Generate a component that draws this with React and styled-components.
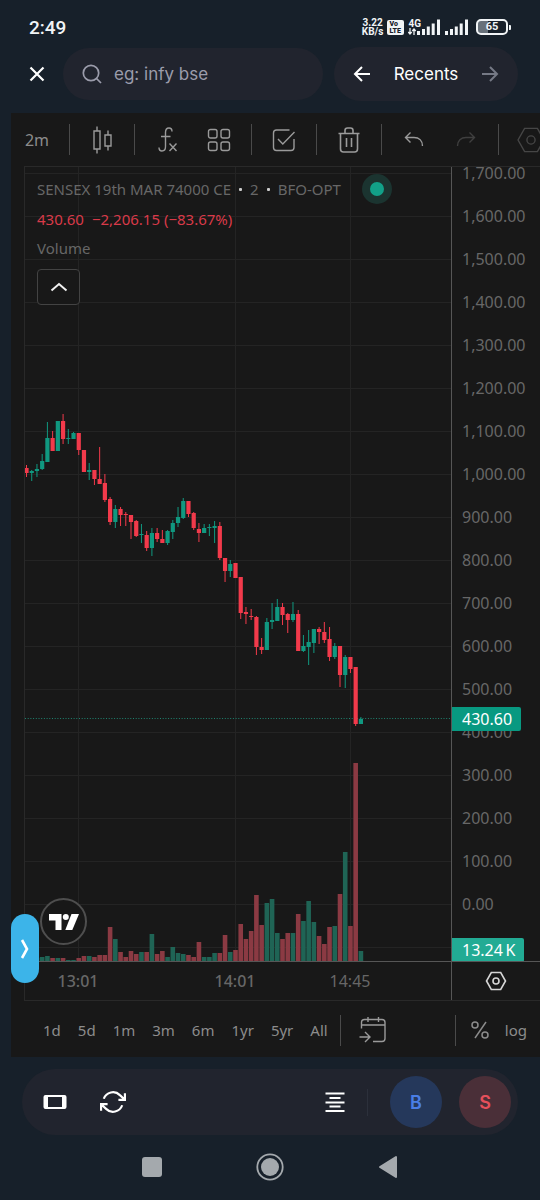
import React from "react";
import styled, { createGlobalStyle } from "styled-components";

const GlobalStyle = createGlobalStyle`
  *, *::before, *::after { box-sizing: border-box; }
  body { margin: 0; background: #17202a; }
  button, input { font: inherit; color: inherit; }
`;

const UP = "#109880";
const DOWN = "#f23a4b";
const chartFont = `"Noto Sans", "Open Sans", sans-serif`;

/* ---------- data ---------- */

// direction, then high / body top / body bottom / low as offsets inside the plot, then volume height
const CANDLES = [
  ["d", 299, 302, 307, 311, 3], ["u", 304, 305, 307, 315, 3], ["u", 298, 303, 305, 311, 3],
  ["u", 288, 295, 303, 304, 4], ["u", 256, 272, 296, 296, 5], ["d", 265, 272, 285, 285, 3],
  ["u", 255, 255, 285, 285, 3], ["d", 248, 255, 273, 278, 3], ["u", 263, 272, 273, 278, 1],
  ["u", 266, 267, 273, 273, 1], ["d", 267, 267, 284, 289, 3], ["d", 284, 284, 306, 306, 5],
  ["u", 297, 304, 306, 314, 5], ["d", 304, 304, 313, 319, 4], ["d", 281, 313, 318, 318, 6],
  ["d", 308, 317, 334, 336, 6], ["d", 331, 333, 356, 359, 34], ["u", 339, 343, 356, 362, 22],
  ["d", 341, 343, 349, 360, 9], ["d", 346, 348, 349, 360, 4], ["d", 349, 349, 356, 373, 10],
  ["d", 354, 355, 370, 371, 7], ["u", 358, 368, 369, 377, 9], ["d", 365, 369, 382, 385, 9],
  ["u", 362, 367, 382, 390, 27], ["d", 362, 367, 373, 376, 7], ["d", 364, 373, 377, 377, 10],
  ["u", 364, 365, 377, 379, 4], ["u", 354, 357, 366, 373, 14], ["u", 341, 351, 357, 361, 8],
  ["u", 332, 335, 352, 353, 7], ["d", 335, 335, 348, 351, 6], ["d", 346, 347, 362, 364, 4],
  ["d", 357, 363, 367, 376, 19], ["u", 358, 362, 367, 367, 4], ["u", 358, 361, 362, 370, 4],
  ["u", 355, 360, 362, 377, 8], ["d", 356, 360, 392, 394, 8], ["d", 392, 392, 405, 416, 26],
  ["u", 394, 398, 405, 411, 9], ["d", 397, 397, 412, 412, 11], ["d", 411, 411, 447, 453, 37],
  ["d", 441, 446, 448, 458, 22], ["d", 443, 450, 451, 454, 30], ["d", 450, 451, 481, 489, 66],
  ["d", 472, 481, 484, 488, 36], ["u", 452, 456, 484, 484, 58], ["u", 437, 454, 456, 463, 62],
  ["u", 433, 441, 455, 455, 28], ["d", 437, 441, 449, 459, 22], ["d", 447, 448, 454, 467, 28],
  ["u", 436, 448, 454, 456, 28], ["d", 444, 448, 485, 485, 47], ["u", 469, 480, 485, 486, 40],
  ["u", 464, 476, 481, 499, 60], ["u", 463, 463, 477, 487, 39], ["d", 461, 463, 466, 478, 25],
  ["d", 456, 466, 474, 477, 17], ["d", 461, 473, 491, 495, 34], ["u", 477, 480, 491, 493, 35],
  ["d", 480, 480, 509, 521, 67], ["u", 489, 491, 509, 522, 109], ["d", 491, 491, 503, 507, 35],
  ["d", 501, 501, 558, 560, 198], ["u", 551, 553, 558, 558, 10],
];
const PRICES = [
  "1,700.00", "1,600.00", "1,500.00", "1,400.00", "1,300.00", "1,200.00", "1,100.00", "1,000.00", "900.00",
  "800.00", "700.00", "600.00", "500.00", "400.00", "300.00", "200.00", "100.00", "0.00",
];
const RANGES = ["1d", "5d", "1m", "3m", "6m", "1yr", "5yr", "All"];
const PLOT_HEIGHT = 794;
const CANDLE_STEP = 5.225;

/* ---------- page ---------- */

const Page = styled.div`
  display: flex;
  flex-direction: column;
  min-height: 100vh;
  background: #17202a;
  overflow: hidden;
`;
const IconButton = styled.button`
  display: flex;
  align-items: center;
  justify-content: center;
  flex: none;
  width: ${(p) => p.$w || 40}px;
  height: 40px;
  padding: 0;
  border: 0;
  background: none;
  color: ${(p) => p.$color || "#fff"};
  cursor: pointer;
`;

/* ---------- status bar ---------- */

const StatusBar = styled.div`
  display: flex;
  align-items: center;
  height: 47px;
  padding: 7px 29px 0;
  color: #f1f4f6;
  font-family: Roboto, sans-serif;
`;
const Clock = styled.time`
  flex: 1;
  font-size: 19px;
  font-weight: 500;
`;
const StatusIcons = styled.div`
  display: flex;
  align-items: center;
  gap: 4px;
`;
const Speed = styled.div`
  font-size: 10px;
  line-height: 9px;
  font-weight: 700;
  text-align: center;
`;
const VoLte = styled.div`
  width: 17px;
  height: 15px;
  padding: 1px 2px;
  border-radius: 2px;
  background: #f1f4f6;
  color: #17202a;
  font-size: 7px;
  line-height: 7px;
  font-weight: 900;
`;
const Network = styled.div`
  display: flex;
  align-items: flex-end;
`;
const NetworkType = styled.div`
  display: flex;
  flex-direction: column;
  align-items: flex-start;
  margin-right: -4px;
  font-size: 10px;
  line-height: 9px;
  font-weight: 700;
`;
const Battery = styled.div`
  display: flex;
  align-items: center;
  margin-left: 3px;
  &::after {
    content: "";
    width: 2px;
    height: 5px;
    margin-left: 1px;
    border-radius: 0 1px 1px 0;
    background: #f1f4f6;
  }
`;
const BatteryCell = styled.div`
  width: 32px;
  height: 16px;
  border: 2px solid #f1f4f6;
  border-radius: 5px;
  background: linear-gradient(90deg, #68717a 0 10px, transparent 10px);
  font-size: 11px;
  line-height: 12px;
  font-weight: 700;
  text-align: center;
`;

/* ---------- search header ---------- */

const Header = styled.header`
  display: flex;
  align-items: center;
  height: 54px;
  padding: 0 22px 0 17px;
  font-family: Inter, sans-serif;
  font-size: 17px;
`;
const SearchPill = styled.label`
  display: flex;
  align-items: center;
  gap: 12px;
  flex: 1;
  min-width: 0;
  height: 52px;
  margin: 0 11px 0 6px;
  padding: 0 20px 0 19px;
  border-radius: 26px;
  background: #21242e;
  color: #9b9cab;
  svg { flex: none; }
`;
const SearchInput = styled.input`
  flex: 1;
  min-width: 0;
  padding: 0;
  border: 0;
  outline: 0;
  background: none;
  &::placeholder { color: #9b9cab; opacity: 1; }
`;
const RecentsPill = styled.nav`
  display: flex;
  align-items: center;
  justify-content: space-between;
  width: 184px;
  height: 54px;
  padding: 0 8px;
  border-radius: 27px;
  background: #21242e;
  color: #fff;
`;

/* ---------- chart ---------- */

const ChartPanel = styled.main`
  margin: 12px 0 0 11px;
  background: #181818;
  font-family: ${chartFont};
  color: #8c8c8c;
`;
const Toolbar = styled.div`
  display: flex;
  align-items: center;
  height: 53px;
  overflow: hidden;
  font-size: 16px;
`;
const ToolDivider = styled.span`
  flex: none;
  width: 1px;
  height: 31px;
  margin: 0 6px;
  background: #4a4a4a;
`;
const ChartFrame = styled.section`
  margin-left: 13px;
  border: solid #292929;
  border-width: 1px 0 1px 1px;
`;
const PlotRow = styled.div`
  display: flex;
  height: ${PLOT_HEIGHT}px;
`;
const Plot = styled.div`
  position: relative;
  flex: 1;
  min-width: 0;
  svg { display: block; }
`;
const Legend = styled.div`
  position: absolute;
  top: 7px;
  left: 12px;
  font-size: 15px;
  line-height: 30px;
  white-space: nowrap;
  color: #676767;
`;
const LegendRow = styled.div`
  display: flex;
  align-items: center;
  height: ${(p) => p.$h || 30}px;
  color: ${(p) => p.$color || "inherit"};
  gap: 8px;
`;
const Dot = styled.b`
  width: 3px;
  height: 3px;
  border-radius: 1px;
  background: #ccc;
`;
const MarketStatus = styled.span`
  width: 30px;
  height: 30px;
  margin-left: 13px;
  border: 8px solid #1b3430;
  border-radius: 50%;
  background: #12a088;
`;
const CollapseButton = styled.button`
  display: flex;
  align-items: center;
  justify-content: center;
  width: 43px;
  height: 36px;
  margin-top: 7px;
  border: 1px solid #434343;
  border-radius: 4px;
  background: #181818;
  color: #f0f0f0;
`;
const Badge = styled.a`
  position: absolute;
  left: 15px;
  bottom: 16px;
  width: 47px;
  height: 47px;
`;
const PullTab = styled.button`
  position: absolute;
  left: -14px;
  bottom: -22px;
  display: flex;
  align-items: center;
  justify-content: center;
  width: 28px;
  height: 69px;
  padding: 0;
  border: 0;
  border-radius: 14px;
  background: #3cb4e9;
`;
const PriceAxis = styled.div`
  position: relative;
  flex: none;
  width: 89px;
  overflow: hidden;
  border-left: 1px solid #565656;
  font-size: 16px;
  color: #676767;
`;
const PriceList = styled.ol`
  margin: -15px 0 0;
  padding: 0 0 0 10px;
  list-style: none;
  line-height: 43px;
`;
const PriceTag = styled.div`
  position: absolute;
  top: ${(p) => p.$top}px;
  left: 0;
  height: 24px;
  padding: 0 9px 0 10px;
  border-radius: 0 2px 2px 0;
  background: ${(p) => p.$bg};
  color: #fff;
  line-height: 24px;
`;
const TimeRow = styled.div`
  display: flex;
  height: 39px;
  border-top: 1px solid #565656;
  font-size: 16px;
  color: #676767;
`;
const Times = styled.div`
  display: flex;
  flex: 1;
  align-items: center;
`;
const TimeLabel = styled.time`
  width: 44px;
  margin-left: ${(p) => p.$before}px;
  text-align: center;
  font-weight: ${(p) => (p.$strong ? 500 : 400)};
`;
const AxisCorner = styled.div`
  display: flex;
  align-items: center;
  justify-content: center;
  width: 89px;
  border-left: 1px solid #565656;
`;
const RangeBar = styled.div`
  display: flex;
  align-items: center;
  height: 56px;
  padding: 2px 13px 0 32px;
  font-size: 15px;
`;
const Ranges = styled.div`
  display: flex;
  gap: 17px;
  flex: none;
`;
const TextButton = styled.button`
  width: ${(p) => (p.$w ? p.$w + "px" : "auto")};
  flex: none;
  padding: 0;
  border: 0;
  background: none;
  text-align: center;
  svg { display: block; }
`;
const RangeDivider = styled.span`
  width: 1px;
  height: 31px;
  flex: none;
  margin: 0 ${(p) => p.$gap}px;
  background: #4a4a4a;
`;
const Scales = styled.div`
  display: flex;
  align-items: center;
  gap: 16px;
`;
const Spacer = styled.span`
  flex: 1;
`;

/* ---------- bottom ---------- */

const ActionBar = styled.div`
  display: flex;
  align-items: center;
  height: 66px;
  margin: 12px 22px 0;
  padding: 0 7px 0 13px;
  border-radius: 33px;
  background: #21242e;
  font-family: Inter, sans-serif;
`;
const ViewActions = styled.div`
  display: flex;
  gap: 18px;
`;
const ActionDivider = styled.span`
  width: 1px;
  height: 27px;
  margin: 0 22px 0 12px;
  background: #2c303b;
`;
const TradeButton = styled.button`
  width: 52px;
  height: 52px;
  margin-left: ${(p) => p.$gap || 0}px;
  padding: 0;
  border: 0;
  border-radius: 50%;
  background: ${(p) => p.$bg};
  color: ${(p) => p.$color};
  font-size: 18px;
  font-weight: 600;
`;
const SystemNav = styled.nav`
  display: flex;
  align-items: center;
  justify-content: center;
  gap: 78px;
  height: 64px;
`;

/* ---------- drawings ---------- */

const Icon = ({ w = 28, h = w, sw = 1.4, box, children }) => (
  <svg width={w} height={h} viewBox={box || `0 0 ${w} ${h}`} fill="none" stroke="currentColor" strokeWidth={sw} aria-hidden="true">
    {children}
  </svg>
);

const Bars = () => (
  <Icon w={24} h={16} sw={3}>
    <path d="M1.5 16v-4M6.5 16v-6M11.3 16V7.500M16.200 16V4.500M21.500 16V.5" />
  </Icon>
);

const Arrow = ({ flip }) => (
  <Icon w={18} sw={2}>
    <path d={flip ? "M1 9h15M9 2l7 7-7 7" : "M17 9H2M9 2L2 9l7 7"} />
  </Icon>
);

const Hexagon = ({ w = 22, sw = 1.6 }) => (
  <Icon w={w} box="0 0 22 22" sw={sw}>
    <path d="M6.300 2.500h9.400L20.500 11l-4.800 8.500H6.300L1.500 11z" />
    <circle cx="11" cy="11" r="3" />
  </Icon>
);

function ChartPlot() {
  const x = (i) => 1.5 + i * CANDLE_STEP;
  return (
    <svg width="100%" height={PLOT_HEIGHT} role="img" aria-label="Price and volume chart">
      <g stroke="#242424">
        {Array.from({ length: 19 }, (_, i) => (
          <line key={i} x1="0" x2="100%" y1={6.5 + i * 43} y2={6.5 + i * 43} />
        ))}
        {[53.5, 210.5, 325.5].map((v) => (
          <line key={v} x1={v} x2={v} y1="0" y2="100%" />
        ))}
      </g>
      {CANDLES.map((c, i) => (
        <rect key={i} x={x(i) - 2.3} y={PLOT_HEIGHT - c[5]} width="4.6" height={c[5]} fill={c[0] === "u" ? "#1f6455" : "#8b3a43"} />
      ))}
      <line x1="0" x2="100%" y1="551.5" y2="551.5" stroke="#1f8470" strokeDasharray="1 1.700" />
      {CANDLES.map(([dir, high, top, bottom, low], i) => (
        <g key={i} fill={dir === "u" ? UP : DOWN}>
          <rect x={x(i) - 0.5} y={high - 1} width="1" height={low - high} />
          <rect x={x(i) - 2.1} y={top - 1} width="4.200" height={Math.max(1, bottom - top)} />
        </g>
      ))}
    </svg>
  );
}

export default function App() {
  return (
    <Page>
      <GlobalStyle />
      <StatusBar>
        <Clock>2:49</Clock>
        <StatusIcons>
          <Speed>3.22<br />KB/s</Speed>
          <VoLte>Vo<br />LTE</VoLte>
          <Network>
            <NetworkType>
              4G
              <Icon w={8} h={7} sw={1.3}><path d="M2 0v6M.3 4L2 6l1.700-2M6 7V1M4.300 3L6 1l1.700 2" /></Icon>
            </NetworkType>
            <Bars />
          </Network>
          <Bars />
          <Battery><BatteryCell>65</BatteryCell></Battery>
        </StatusIcons>
      </StatusBar>

      <Header>
        <IconButton aria-label="Close">
          <Icon w={18} sw={2.200}><path d="M2.500 2.500l13 13M15.500 2.500l-13 13" /></Icon>
        </IconButton>
        <SearchPill>
          <Icon w={20} sw={1.700}><circle cx="9" cy="9" r="7.700" /><path d="M14.500 14.500l4.500 4.500" /></Icon>
          <SearchInput aria-label="Search" placeholder="eg: infy bse" />
        </SearchPill>
        <RecentsPill aria-label="Recents">
          <IconButton aria-label="Previous"><Arrow /></IconButton>
          <span>Recents</span>
          <IconButton $color="#757985" aria-label="Next"><Arrow flip /></IconButton>
        </RecentsPill>
      </Header>

      <ChartPanel>
        <Toolbar>
          <TextButton $w={52}>2m</TextButton>
          <ToolDivider />
          <IconButton $w={52} $color="#9a9a9a" aria-label="Chart type">
            <Icon w={28}>
              <path d="M6 5h6v18H6zM9 .5V5M9 23v4.500M17 9h6v11h-6zM20 4.500V9M20 20v4.500" />
            </Icon>
          </IconButton>
          <ToolDivider />
          <IconButton $w={52} $color="#9a9a9a" aria-label="Indicators">
            <Icon w={28}>
              <path d="M19 5.500c0-2.600-1.300-3.500-3-3.500-2.400 0-3.500 1.500-3.500 4.500v14c0 3-1.200 4.500-3.500 4.500-1.800 0-3-1-3-3.500M8 10.500h9.500M16.500 17.500l7 7.500M23.500 17.500l-7 7.500" />
            </Icon>
          </IconButton>
          <IconButton $w={52} $color="#9a9a9a" aria-label="Templates">
            <Icon w={24}>
              <rect x="1.500" y="1.500" width="8.500" height="8.500" rx="2" />
              <rect x="14" y="1.500" width="8.500" height="8.500" rx="2" />
              <rect x="1.500" y="14" width="8.500" height="8.500" rx="2" />
              <rect x="14" y="14" width="8.500" height="8.500" rx="2" />
            </Icon>
          </IconButton>
          <ToolDivider />
          <IconButton $w={52} $color="#9a9a9a" aria-label="Orders">
            <Icon w={24}>
              <path d="M17.500 2H4.500A3 3 0 0 0 1.500 5v14.500a3 3 0 0 0 3 3H19a3 3 0 0 0 3-3V11M6 11l4.800 5L22.500 4" />
            </Icon>
          </IconButton>
          <ToolDivider />
          <IconButton $w={52} $color="#9a9a9a" aria-label="Remove">
            <Icon w={24} h={28} sw={1.600}>
              <path d="M1.500 7.500h21M8 7.500V4.500a2.500 2.500 0 0 1 2.500-2.500h3A2.500 2.500 0 0 1 16 4.500v3M3.500 7.500V23a3 3 0 0 0 3 3h11a3 3 0 0 0 3-3V7.500M9.500 12v9M14.500 12v9" />
            </Icon>
          </IconButton>
          <ToolDivider />
          <IconButton $w={52} $color="#9a9a9a" aria-label="Undo">
            <Icon w={20} h={18}><path d="M6.500 1.500l-5 5 5 5M1.500 6.500H10c5 0 8.500 3 8.500 8.500" /></Icon>
          </IconButton>
          <IconButton $w={52} $color="#3f3f3f" aria-label="Redo">
            <Icon w={20} h={18}><path d="M13.500 1.500l5 5-5 5M18.500 6.500H10c-5 0-8.500 3-8.500 8.500" /></Icon>
          </IconButton>
          <ToolDivider />
          <IconButton $w={52} $color="#464646" aria-label="Settings"><Hexagon w={30} sw={1} /></IconButton>
        </Toolbar>

        <ChartFrame>
          <PlotRow>
            <Plot>
              <ChartPlot />
              <Legend>
                <LegendRow>
                  <span>SENSEX 19th MAR 74000 CE</span><Dot /><span>2</span><Dot /><span>BFO-OPT</span>
                  <MarketStatus />
                </LegendRow>
                <LegendRow $color="#d93a49"><span>430.60</span><span>−2,206.15 (−83.67%)</span></LegendRow>
                <LegendRow $h={28}>Volume</LegendRow>
                <CollapseButton aria-label="Collapse legend">
                  <Icon w={18} h={10} sw={2}><path d="M1.500 8.500L9 2l7.500 6.500" /></Icon>
                </CollapseButton>
              </Legend>
              <Badge href="#" aria-label="Charts by TradingView">
                <svg width="47" height="47" aria-hidden="true">
                  <circle cx="23.500" cy="23.500" r="22.500" fill="#181818" stroke="#4e4e4e" strokeWidth="2" />
                  <g fill="#fff">
                    <path d="M9 16h12.500v16h-6V22.500H9z" />
                    <circle cx="25.800" cy="19" r="3" />
                    <path d="M31.500 16H39l-6.700 16h-7z" />
                  </g>
                </svg>
              </Badge>
              <PullTab aria-label="Open drawing tools">
                <svg width="10" height="20" fill="none" stroke="#fff" strokeWidth="2.600" aria-hidden="true">
                  <path d="M2 1l5 9-5 9" />
                </svg>
              </PullTab>
            </Plot>
            <PriceAxis>
              <PriceList>{PRICES.map((p) => <li key={p}>{p}</li>)}</PriceList>
              <PriceTag $top={540} $bg="#089981">430.60</PriceTag>
              <PriceTag $top={771} $bg="#22ab94">13.24{"\u2009"}K</PriceTag>
            </PriceAxis>
          </PlotRow>
          <TimeRow>
            <Times>
              <TimeLabel $before={31} $strong>13:01</TimeLabel>
              <TimeLabel $before={113} $strong>14:01</TimeLabel>
              <TimeLabel $before={71}>14:45</TimeLabel>
            </Times>
            <AxisCorner>
              <IconButton $color="#d6d6d6" aria-label="Axis settings"><Hexagon /></IconButton>
            </AxisCorner>
          </TimeRow>
        </ChartFrame>

        <RangeBar>
          <Ranges>{RANGES.map((r) => <TextButton key={r}>{r}</TextButton>)}</Ranges>
          <RangeDivider $gap={12} />
          <IconButton $color="#9a9a9a" aria-label="Go to date">
            <Icon w={28} h={28}>
              <path d="M2.500 12.500V6.500a3 3 0 0 1 3-3H23a3 3 0 0 1 3 3V22.500a3 3 0 0 1-3 3H14M2.500 9H26M9 1v5M19.500 1v5M.5 21h10M6 16l5 5-5 5" />
            </Icon>
          </IconButton>
          <Spacer />
          <RangeDivider $gap={15} />
          <Scales>
            <TextButton aria-label="Percent scale">
              <Icon w={18} h={20} sw={1.500}>
                <circle cx="4" cy="5" r="3" /><circle cx="14" cy="15" r="3" /><path d="M15 2L4 18" />
              </Icon>
            </TextButton>
            <TextButton>log</TextButton>
          </Scales>
        </RangeBar>
      </ChartPanel>

      <ActionBar>
        <ViewActions>
          <IconButton aria-label="Rotate screen">
            <svg width="24" height="16" aria-hidden="true">
              <path fillRule="evenodd" fill="currentColor" d="M2.500 1h19A2 2 0 0 1 23.500 3v10a2 2 0 0 1-2 2h-19a2 2 0 0 1-2-2V3a2 2 0 0 1 2-2zM5 3v10h14V3z" />
            </svg>
          </IconButton>
          <IconButton aria-label="Refresh">
            <Icon w={26} box="0 0 24 24" sw={2}>
              <path d="M23 4v6h-6M1 20v-6h6M3.510 9a9 9 0 0 1 14.850-3.360L23 10M1 14l4.640 4.360A9 9 0 0 0 20.490 15" />
            </Icon>
          </IconButton>
        </ViewActions>
        <Spacer />
        <IconButton aria-label="Market depth">
          <Icon w={20} sw={2}><path d="M.5 1.500h19M4.500 6h11M.5 10.500h19M4.500 14.500h11M.5 19h19" /></Icon>
        </IconButton>
        <ActionDivider />
        <TradeButton $bg="#25385b" $color="#4a7ee6">B</TradeButton>
        <TradeButton $gap={17} $bg="#4a2f38" $color="#e5505b">S</TradeButton>
      </ActionBar>

      <SystemNav aria-label="System">
        <IconButton $color="#a4a9ad" aria-label="Recent apps">
          <svg width="20" height="20" aria-hidden="true"><rect width="20" height="20" rx="3" fill="currentColor" /></svg>
        </IconButton>
        <IconButton $color="#a4a9ad" aria-label="Home">
          <svg width="28" height="28" aria-hidden="true">
            <circle cx="14" cy="14" r="12.700" fill="none" stroke="currentColor" strokeWidth="1.800" />
            <circle cx="14" cy="14" r="9" fill="currentColor" />
          </svg>
        </IconButton>
        <IconButton $color="#a4a9ad" aria-label="Back">
          <svg width="20" height="24" aria-hidden="true">
            <path d="M2 12L18 2v20z" fill="currentColor" stroke="currentColor" strokeWidth="2" strokeLinejoin="round" />
          </svg>
        </IconButton>
      </SystemNav>
    </Page>
  );
}
